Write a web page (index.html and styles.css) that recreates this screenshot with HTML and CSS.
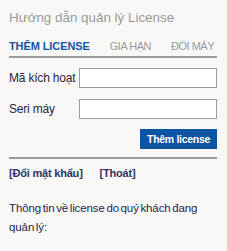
FILE: index.html
```html
<!DOCTYPE html>
<html>
<head>
<meta charset="utf-8">
<link rel="stylesheet" href="styles.css">
</head>
<body>
<div class="panel">
  <div class="title">Hướng dẫn quản lý License</div>
  <div class="tabs">
    <span class="tab active">THÊM LICENSE</span>
    <span class="tab">GIA HẠN</span>
    <span class="tab">ĐỔI MÁY</span>
  </div>
  <form class="form">
    <div class="row">
      <label class="label">Mã kích hoạt</label>
      <input class="input" type="text">
    </div>
    <div class="row">
      <label class="label">Seri máy</label>
      <input class="input" type="text">
    </div>
    <div class="actions">
      <button class="btn" type="button">Thêm license</button>
    </div>
  </form>
  <div class="links">
    <a class="link">[Đổi mật khẩu]</a>
    <a class="link">[Thoát]</a>
  </div>
  <p class="info">Thông tin về license do quý khách đang quản lý:</p>
</div>
</body>
</html>
```
FILE: styles.css
```css
html, body {
  margin: 0;
  padding: 0;
  background: #f9f8f6;
}
body {
  font-family: "Liberation Sans", Arial, sans-serif;
}
.panel {
  width: 208px;
  padding: 0 10px 0 9px;
}
.title {
  color: #999999;
  font-size: 13.4px;
  line-height: 16px;
  padding-top: 10px;
}
.tabs {
  display: flex;
  justify-content: space-between;
  margin-top: 14px;
  padding: 0 3px 3px 0;
  border-bottom: 2px solid #9b9b9b;
}
.tab {
  font-size: 11px;
  line-height: 13px;
  color: #9a9a9a;
  letter-spacing: -0.5px;
}
.tab.active {
  color: #1755a3;
  font-weight: bold;
  letter-spacing: -0.1px;
}
.form {
  margin: 10px 0 0;
}
.row {
  display: flex;
  align-items: center;
  justify-content: space-between;
  margin-bottom: 11px;
}
.label {
  font-size: 12px;
  letter-spacing: -0.2px;
  color: #2b2344;
}
.input {
  box-sizing: border-box;
  width: 138px;
  height: 20px;
  margin: 0;
  border: 1px solid #9d9d9d;
  background: #fff;
}
.actions {
  display: flex;
  justify-content: flex-end;
  padding-bottom: 8px;
  border-bottom: 2px solid #9b9b9b;
  margin-top: -1px;
}
.btn {
  box-sizing: border-box;
  width: 77px;
  height: 20px;
  border: 0;
  padding: 0;
  background: #0b55a3;
  color: #fff;
  font-family: inherit;
  font-weight: bold;
  font-size: 10.5px;
  letter-spacing: -0.3px;
}
.links {
  display: flex;
  gap: 17px;
  margin-top: 8px;
  line-height: 13px;
}
.link {
  font-size: 11px;
  font-weight: bold;
  color: #2b3566;
  letter-spacing: -0.2px;
}
.info {
  margin: 19px 0 0;
  font-size: 11.5px;
  line-height: 19px;
  word-spacing: -1.5px;
  letter-spacing: -0.1px;
  color: #1d1f4a;
}
```
